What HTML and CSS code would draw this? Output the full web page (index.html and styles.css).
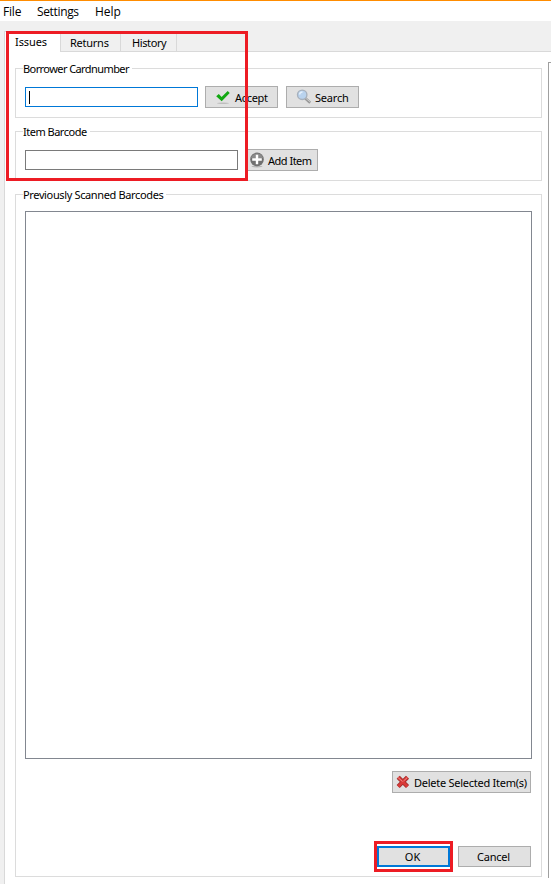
FILE: index.html
```
<!DOCTYPE html>
<html lang="en">
<head>
<meta charset="utf-8">
<title>Offline Circulation</title>
<link rel="stylesheet" href="styles.css">
</head>
<body>
<div class="window">
  <nav class="menu"><span class="m-file">File</span><span class="m-settings">Settings</span><span class="m-help">Help</span></nav>
  <div class="tabs">
    <div class="tab active"><span class="t-issues">Issues</span></div>
    <div class="tab returns"><span class="t-returns">Returns</span></div>
    <div class="tab history"><span class="t-history">History</span></div>
  </div>
  <div class="content">
    <main class="panel">
      <section class="group borrower">
        <h2 class="legend"><span class="l-borrower">Borrower Cardnumber</span></h2>
        <div class="row">
          <div class="field focused"><i class="caret"></i></div>
          <button class="btn accept">
            <svg class="icon" width="16" height="16" viewBox="0 0 16 16"><ellipse cx="8" cy="14.3" rx="6" ry=".7" fill="#bdbdbd"/><path d="M1.2 7.2 3.8 5l2.8 3.1L12.7 2l2 2-8 8.3z" fill="#12a812"/></svg>
            <span class="b-accept">Accept</span>
          </button>
          <button class="btn search">
            <svg class="icon" width="16" height="16" viewBox="0 0 16 16"><path d="m9 9 5.2 4.7" stroke="#999" stroke-width="2.8"/><path d="m9.5 9 5 4.2" stroke="#c9c9c9" stroke-width="1"/><circle cx="6.2" cy="5.8" r="4.7" fill="#b9d3ee" stroke="#a7b1bd" stroke-width="1.4"/><path d="M3.5 5.5Q4 3 6.5 3" fill="none" stroke="#e4f0fc" stroke-width="1.4"/></svg>
            <span class="b-search">Search</span>
          </button>
        </div>
      </section>
      <section class="group item">
        <h2 class="legend"><span class="l-item">Item Barcode</span></h2>
        <div class="row">
          <div class="field barcode"></div>
          <button class="btn add">
            <svg class="icon" width="16" height="16" viewBox="0 0 16 16"><ellipse cx="8" cy="14.6" rx="5.5" ry=".8" fill="#b5b5b5"/><circle cx="8" cy="7.4" r="6.8" fill="#707070"/><path d="M2 6a6.3 6.3 0 0 1 12 0" fill="#8b8b8b"/><path d="M8 2.7v9.6M3.2 7.5h9.6" stroke="#fff" stroke-width="2.4"/></svg>
            <span class="b-add">Add Item</span>
          </button>
        </div>
      </section>
      <section class="group scanned">
        <h2 class="legend"><span class="l-scanned">Previously Scanned Barcodes</span></h2>
        <div class="list"></div>
        <button class="btn delete">
          <svg class="icon" width="16" height="16" viewBox="0 0 16 16"><path d="m3.2 3.2 9.3 9.3M12.5 3.2l-9.3 9.3" stroke="#9d2e2e" stroke-width="4.4"/><path d="m3.2 3.2 9.3 9.3M12.5 3.2l-9.3 9.3" stroke="#d93a38" stroke-width="2.8"/><path d="m3 3.5 4.5 4M12.4 3.5 8.5 7" stroke="#ee8a86" stroke-width="1"/></svg>
          <span class="b-delete">Delete Selected Item(s)</span>
        </button>
        <div class="actions">
          <button class="btn ok"><span class="b-ok">OK</span></button>
          <button class="btn cancel"><span class="b-cancel">Cancel</span></button>
        </div>
      </section>
    </main>
    <aside class="side"></aside>
  </div>
  <div class="mark mark-form"></div>
  <div class="mark mark-ok"></div>
</div>
</body>
</html>
```
FILE: styles.css
```
* { box-sizing: border-box; }
body { margin: 0; background: #f0f0f0; color: #000; font: 11px/14px "Noto Sans", sans-serif; }
.window { position: relative; width: 551px; height: 884px; overflow: hidden; border-top: 1px solid #ff8c00; display: flex; flex-direction: column; }
.window span { white-space: nowrap; }
.menu { height: 20px; flex: none; background: #fff; display: flex; padding: 3px 0 0 3px; font: 12px/16px "Open Sans", sans-serif; }
.m-file { width: 34px; letter-spacing: -.2px; }
.m-settings { width: 58px; letter-spacing: -.35px; }
.tabs { height: 30px; flex: none; margin-left: 4px; padding-top: 10px; display: flex; align-items: flex-end; }
.tab { height: 18px; border: 1px solid #d9d9d9; border-width: 1px 1px 0 0; padding: 2px 0 0 9px; }
.tab.active { position: relative; width: 57px; height: 21px; margin-bottom: -1px; background: #fff; border-left-width: 1px; padding: 3px 0 0 10px; }
.returns { width: 60px; }
.history { width: 56px; padding-left: 11px; }
.t-issues { letter-spacing: -.1px; }
.t-returns { letter-spacing: -.25px; }
.t-history { letter-spacing: -.4px; }
.content { flex: 1; margin-left: 4px; border: 1px solid #d9d9d9; border-width: 1px 0 0 1px; background: #fff; display: flex; }
.panel { width: 527px; margin: 16px 0 0 10px; }
.side { width: 3px; height: 816px; margin: 10px 0 0 6px; border: 1px solid #a0a0a0; border-width: 1px 0 0 1px; }
.group { border: 1px solid #dcdcdc; height: 50px; padding: 0 9px; margin-bottom: 13px; }
.scanned { height: 683px; margin: 0; }
.legend { width: max-content; height: 14px; margin: -7px 0 0 -2px; padding-right: 3px; background: #fff; font-size: 11px; font-weight: 400; }
.l-borrower { letter-spacing: -.58px; }
.l-item { letter-spacing: -.5px; }
.l-scanned { letter-spacing: -.36px; }
.row { display: flex; align-items: center; margin-top: 10px; }
.field { height: 20px; border: 1px solid #7a7a7a; background: #fff; }
.focused { width: 173px; border-color: #0078d7; padding: 3px; }
.caret { display: block; width: 1px; height: 13px; background: #000; }
.barcode { width: 213px; }
.btn { height: 22px; border: 1px solid #adadad; border-radius: 0; background: #e1e1e1; color: #000; padding: 0; display: flex; align-items: center; font: 11px/14px "Noto Sans", sans-serif; }
.icon { flex: none; display: block; }
.icon + span { padding-top: 2px; }
.accept { width: 73px; margin-left: 7px; padding-left: 9px; gap: 4px; }
.search { width: 73px; margin-left: 8px; padding-left: 9px; gap: 3px; }
.add { width: 73px; margin-left: 7px; padding-left: 3px; gap: 3px; }
.b-accept { letter-spacing: -.3px; }
.b-search { letter-spacing: -.2px; }
.b-add { letter-spacing: -.5px; }
.b-delete { letter-spacing: -.26px; }
.list { width: 507px; height: 548px; border: 1px solid #828790; margin-top: 9px; }
.delete { width: 139px; margin: 12px 0 0 367px; padding-left: 2px; gap: 3px; }
.actions { display: flex; gap: 8px; margin: 53px 0 0 352px; }
.ok, .cancel { width: 73px; height: 21px; justify-content: center; padding-right: 2px; }
.ok { border: 2px solid #0078d7; }
.b-cancel { letter-spacing: -.2px; }
.mark { position: absolute; border: 3px solid #ed1c24; }
.mark-form { left: 6px; top: 30px; width: 242px; height: 150px; }
.mark-ok { left: 374px; top: 840px; width: 79px; height: 31px; }
```
